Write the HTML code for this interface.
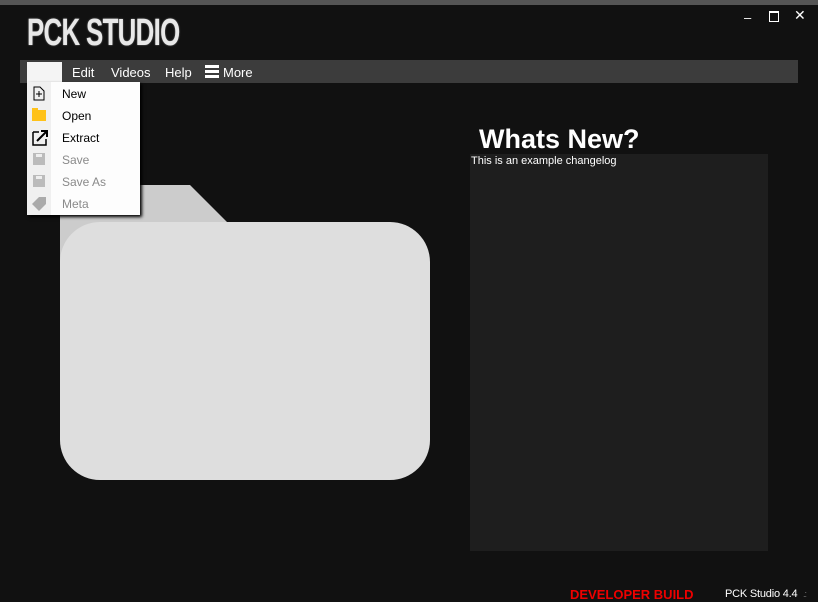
<!DOCTYPE html>
<html><head><style>
body{margin:0;width:818px;height:602px;background:#111;overflow:hidden;position:relative;font-family:"Liberation Sans",sans-serif}
.a{position:absolute}
.menu span{position:absolute;top:5px;color:#fff;font-size:13px}
.dd div{position:absolute;left:35px;font-size:12px;color:#000}
.dd .g{color:#8a8a8a}
</style></head><body>
<div class="a" style="left:0;top:0;width:818px;height:5px;background:#555"></div>
<div class="a" style="left:27px;top:12px;font:bold 38px 'Liberation Sans',sans-serif;color:#e8e8e8;letter-spacing:-1px;transform:scaleX(0.68);transform-origin:left;text-shadow:0 0 2px #888;white-space:nowrap">PCK STUDIO</div>
<div class="a" style="left:744px;top:10px;color:#fff;font-size:13px">–</div>
<div class="a" style="left:769px;top:11px;width:8px;height:8px;border:1px solid #fff;border-top-width:2px"></div>
<div class="a" style="left:794px;top:7px;color:#fff;font-size:14px">✕</div>
<div class="a menu" style="left:20px;top:60px;width:778px;height:23px;background:#3c3c3c">
<div class="a" style="left:7px;top:2px;width:35px;height:21px;background:#f4f4f4"></div>
<span style="left:52px">Edit</span><span style="left:91px">Videos</span><span style="left:145px">Help</span>
<div class="a" style="left:185px;top:5px;width:14px;height:13px;background:linear-gradient(#fff 0 3px,#3c3c3c 3px 5px,#fff 5px 8px,#3c3c3c 8px 10px,#fff 10px)"></div>
<span style="left:203px">More</span></div>
<svg class="a" style="left:0;top:0" width="818" height="602">
<polygon points="60,185 190,185 227,222 60,222" fill="#cccccc"/>
<rect x="60" y="222" width="40" height="40" fill="#cccccc"/>
<path d="M60,262 A40,40 0 0 1 100,222 H390 A40,40 0 0 1 430,262 V440 A40,40 0 0 1 390,480 H100 A40,40 0 0 1 60,440 Z" fill="#dedede"/>
</svg>
<div class="a dd" style="left:27px;top:82px;width:113px;height:133px;background:#fdfdfd;box-shadow:2px 2px 3px #000">
<div class="a" style="left:0;top:0;width:24px;height:133px;background:#f0f0f0"></div>
<svg class="a" style="left:0;top:0" width="24" height="133">
<path d="M7,5 H13 L17,9 V18 H7 Z" fill="none" stroke="#000"/><path d="M12,9 V15 M9,12 H15" stroke="#000"/>
<rect x="5" y="28" width="14" height="11" fill="#ffc219"/><rect x="5" y="26" width="6" height="3" fill="#ffc219"/>
<path d="M6,50 H12 M6,50 V63 H19 V57" fill="none" stroke="#000" stroke-width="1.5"/><path d="M10,59 L19,50 M14,49 H20 V55" fill="none" stroke="#000" stroke-width="2"/>
<rect x="6" y="71" width="12" height="12" fill="#bbb"/><rect x="9" y="72" width="6" height="3" fill="#eee"/>
<rect x="6" y="93" width="12" height="12" fill="#bbb"/><rect x="9" y="94" width="6" height="3" fill="#eee"/>
<path d="M12,115 H19 V122 L12,129 L5,122 Z" fill="#aaa"/>
</svg>
<div style="top:5px">New</div><div style="top:27px">Open</div><div style="top:49px">Extract</div>
<div class="g" style="top:71px">Save</div><div class="g" style="top:93px">Save As</div><div class="g" style="top:115px">Meta</div>
</div>
<div class="a" style="left:479px;top:124px;font:bold 27px 'Liberation Sans',sans-serif;color:#fff">Whats New?</div>
<div class="a" style="left:470px;top:154px;width:298px;height:397px;background:#1e1e1e"></div>
<div class="a" style="left:471px;top:155px;font-size:11px;color:#fff">This is an example changelog</div>
<div class="a" style="left:570px;top:587px;font:bold 13px 'Liberation Sans',sans-serif;color:#e00">DEVELOPER BUILD</div>
<div class="a" style="left:725px;top:588px;font-size:11px;color:#fff;letter-spacing:-0.2px">PCK Studio 4.4</div>
<div class="a" style="left:803px;top:589px;color:#777;font-size:9px;letter-spacing:-1px">.:</div>
</body></html>
